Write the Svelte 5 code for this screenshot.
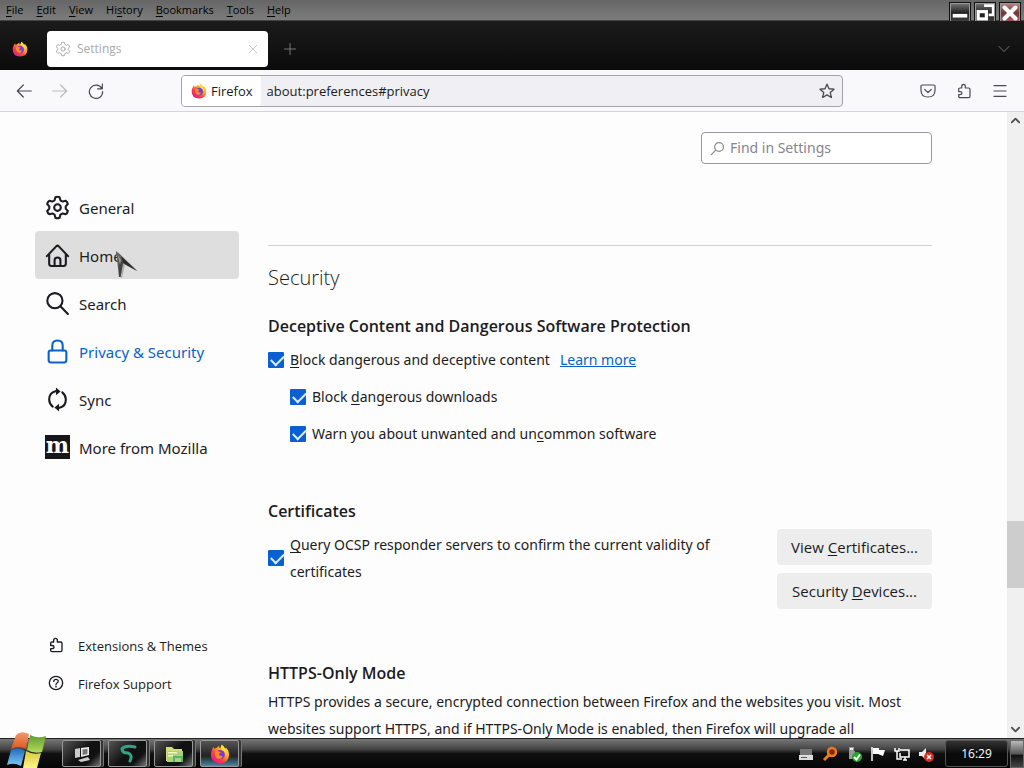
<script lang="ts">
    /* Browser window with the settings page open, above the desktop taskbar. */

    type Item = { icon: string, label: string, state?: string };

    const menus = ['File', 'Edit', 'View', 'History', 'Bookmarks', 'Tools', 'Help'];
    const menuKeys = [0, 0, 0, 2, 0, 0, 0];

    const categories: Item[] = [
        { icon: 'gear', label: 'General' },
        { icon: 'home', label: 'Home', state: 'hovered' },
        { icon: 'search', label: 'Search' },
        { icon: 'lock', label: 'Privacy & Security', state: 'selected' },
        { icon: 'sync', label: 'Sync' },
        { icon: 'mozilla', label: 'More from Mozilla' }
    ];

    const extras: Item[] = [
        { icon: 'puzzle', label: 'Extensions & Themes' },
        { icon: 'help', label: 'Firefox Support' }
    ];

    const tasks = ['pc', 'snake', 'folder', 'firefox'];
    const tray = ['drive', 'key', 'usb', 'flag', 'network', 'sound'];

    let blockContent = $state(true);
    let blockDownloads = $state(true);
    let warnSoftware = $state(true);
    let queryOcsp = $state(true);
    let address = $state('about:preferences#privacy');
    let query = $state('');
</script>

{#snippet icon(name: string)}
    <svg class="icon" viewBox="0 0 24 24" aria-hidden="true">
        {#if name === 'gear'}
            <path d="M10 2.2Q12 1.2 14 2.2L14.8 5.1L17 6.3L19.9 5.6Q21.5 6.6 21.9 8.7L19.9 10.9V13.1L21.9 15.3Q21.5 17.4 19.9 18.4L17 17.7L14.8 18.9L14 21.8Q12 22.8 10 21.8L9.2 18.9L7 17.7L4.1 18.4Q2.5 17.4 2.1 15.3L4.1 13.1V10.9L2.1 8.7Q2.5 6.6 4.1 5.6L7 6.3L9.2 5.1Z" />
            <circle cx="12" cy="12" r="3.2" />
        {:else if name === 'home'}
            <path d="M1.8 12.6L11 3Q12 2.1 13 3L22.2 12.6M4 10.6V20Q4 22 6 22H18Q20 22 20 20V10.6M9.2 22V16.5Q9.2 14 12 14Q14.8 14 14.8 16.5V22" />
        {:else if name === 'search'}
            <circle cx="9.5" cy="9.3" r="7.3" /><path d="M15 14.8L22 22" />
        {:else if name === 'find'}
            <circle cx="14.5" cy="9.5" r="7" /><path d="M9.2 14.6L2 21.8" />
        {:else if name === 'lock'}
            <rect x="3.5" y="11" width="17" height="11.5" rx="2" /><path d="M7 11V6.5Q7 1.5 12 1.5Q17 1.5 17 6.5V11" />
        {:else if name === 'sync'}
            <path d="M10 4Q4 5.5 4 12Q4 16 7.4 18.8M14 20Q20 18.5 20 12Q20 8 16.6 5.2" />
            <path class="solid" d="M10.5 .5V8L15 4.3ZM13.5 16V23.5L9 19.7Z" />
        {:else if name === 'puzzle'}
            <path d="M8.5 7.5V5.2Q8.5 2 11.3 2Q14 2 14 5.2V7.5H19Q21 7.5 21 9.5V20Q21 22 19 22H6Q4 22 4 20V17.5H6Q9 17.5 9 15Q9 12.8 6.5 12.8H4V9.5Q4 7.5 6 7.5Z" />
        {:else if name === 'help'}
            <circle cx="12" cy="12" r="10" /><path d="M8.7 9.6Q8.8 6.5 12 6.5Q15.3 6.5 15.3 9.3Q15.3 11 13.5 12Q12 12.9 12 14.4M12 16.8V18" />
        {:else if name === 'back'}
            <path d="M23 12H2M11 3L2 12L11 21" />
        {:else if name === 'forward'}
            <path d="M1 12H22M13 3L22 12L13 21" />
        {:else if name === 'reload'}
            <path d="M20.6 8A10 10 0 1 0 22 13M21.5 1.5V8.7H14.3" />
        {:else if name === 'close'}
            <path d="M3 3L21 21M21 3L3 21" />
        {:else if name === 'plus'}
            <path d="M12 1V23M1 12H23" />
        {:else if name === 'down'}
            <path d="M2 7L12 17L22 7" />
        {:else if name === 'up'}
            <path d="M2 17L12 7L22 17" />
        {:else if name === 'star'}
            <path d="M12 1.8L15 8.6L22.5 9.3L16.9 14.3L18.6 21.8L12 17.9L5.4 21.8L7.1 14.3L1.5 9.3L9 8.6Z" />
        {:else if name === 'pocket'}
            <path d="M3.5 3H20.5Q22.5 3 22.5 5V11Q22.5 21 12 21Q1.5 21 1.5 11V5Q1.5 3 3.5 3ZM7 9.5L12 14.3L17 9.5" />
        {:else if name === 'menu'}
            <path d="M3 4H21M3 12H21M3 20H21" />
        {/if}
    </svg>
{/snippet}

{#snippet firefox()}
    <svg class="icon" viewBox="0 0 24 24" aria-hidden="true">
        <defs>
            <linearGradient id="flame" x1=".85" y1=".1" x2=".15" y2=".9">
                <stop offset="0" stop-color="#ffe83a" />
                <stop offset=".38" stop-color="#ff9a1f" />
                <stop offset=".68" stop-color="#ff3b47" />
                <stop offset="1" stop-color="#d8208f" />
            </linearGradient>
        </defs>
        <path fill="url(#flame)" d="M2.3 7.2Q3 5 4.6 3.4L5.2 5.6Q6.5 4.7 8 4.8Q9 3 11 2.5L11.3 5Q13.5 5 13.7 1Q17 2.5 18 5.5L19.5 4.5Q23 8 23 13Q22.4 23 12 23.3Q1 22.6 1 12.6Q1 9.6 2.3 7.2Z" />
        <circle cx="12.2" cy="12.8" r="5.6" fill="#7a3bd8" />
        <path fill="#ff8a20" d="M6 9Q8.5 7.5 11 9.2Q13 9.3 13 10.4Q11 11 10.6 12Q11.5 15.4 15 14Q14 18.8 9.5 17.6Q5 15.5 6 9Z" />
        <path fill="#ffdb3d" d="M13.7 1Q17 2.5 18 6.5Q20.5 9 19.3 14Q18 8.5 14.6 7.6Q12.8 5 13.7 1Z" />
    </svg>
{/snippet}

{#snippet category(item: Item)}
    <a class={['item', item.state]} href="#{item.icon}">
        {#if item.icon === 'mozilla'}
            <span class="mozilla" aria-hidden="true">m</span>
        {:else}
            {@render icon(item.icon)}
        {/if}
        <span class="name">{item.label}</span>
        {#if item.state === 'hovered'}
            <svg class="pointer" viewBox="0 0 22 28" aria-hidden="true">
                <path d="M2 1L22 20L9 14L6 27L4 26Z" fill="#0003" />
                <path d="M0 0L21 20L7 12L4.5 26L3 26Z" fill="#666" />
                <path d="M0 0L7 12L4.5 26L3 26L2.5 9Z" fill="#444" />
                <path d="M5 5L21 20L7 12Z" fill="#2c2c2c" />
                <path d="M1 2L5 9L4 14Z" fill="#999" />
            </svg>
        {/if}
    </a>
{/snippet}

<div class="screen">
    <header class="menubar">
        <nav>
            {#each menus as name, i}
                <button>{name.slice(0, menuKeys[i])}<u>{name[menuKeys[i]]}</u>{name.slice(menuKeys[i] + 1)}</button>
            {/each}
        </nav>
        <div class="window-buttons">
            <button aria-label="Minimize">
                <svg viewBox="0 0 22 22"><path d="M3 12H19V16H3Z" fill="#fff" /></svg>
            </button>
            <button aria-label="Restore">
                <svg viewBox="0 0 22 22">
                    <path d="M10 3H20V13H15" fill="none" stroke="#fff" stroke-width="3" />
                    <rect x="3.5" y="9.5" width="9" height="8" fill="#222" stroke="#fff" stroke-width="3.5" />
                </svg>
            </button>
            <button class="close" aria-label="Close">
                <svg viewBox="0 0 22 22"><path d="M5 5L17 17M17 5L5 17" stroke="#fff" stroke-width="4.5" stroke-linecap="round" /></svg>
            </button>
        </div>
    </header>

    <div class="tabs">
        <span class="brand">{@render firefox()}</span>
        <div class="tab">
            {@render icon('gear')}
            <span>Settings</span>
            <button class="tab-close" aria-label="Close tab">{@render icon('close')}</button>
        </div>
        <button class="new-tab" aria-label="New tab">{@render icon('plus')}</button>
        <button class="all-tabs" aria-label="List all tabs">{@render icon('down')}</button>
    </div>

    <div class="toolbar">
        <div class="tools">
            <button aria-label="Back">{@render icon('back')}</button>
            <button class="dim" aria-label="Forward" disabled>{@render icon('forward')}</button>
            <button aria-label="Reload">{@render icon('reload')}</button>
        </div>
        <div class="urlbar">
            <span class="identity">{@render firefox()} Firefox</span>
            <input aria-label="Address" bind:value={address} />
            <button aria-label="Bookmark this page">{@render icon('star')}</button>
        </div>
        <div class="tools right">
            <button aria-label="Save to Pocket">{@render icon('pocket')}</button>
            <button aria-label="Extensions">{@render icon('puzzle')}</button>
            <button aria-label="Application menu">{@render icon('menu')}</button>
        </div>
    </div>

    <div class="page">
        <nav class="sidebar">
            {#each categories as item}
                {@render category(item)}
            {/each}
            <div class="extras">
                {#each extras as item}
                    {@render category(item)}
                {/each}
            </div>
        </nav>

        <main>
            <label class="find">
                {@render icon('find')}
                <input type="text" placeholder="Find in Settings" aria-label="Find in Settings" bind:value={query} />
            </label>

            <h1>Security</h1>

            <section>
                <h2>Deceptive Content and Dangerous Software Protection</h2>
                <div class="check">
                    <input id="block-content" type="checkbox" bind:checked={blockContent} />
                    <label for="block-content"><u>B</u>lock dangerous and deceptive content</label>
                    <a href="#learn">Learn more</a>
                </div>
                <div class="check nested">
                    <input id="block-downloads" type="checkbox" bind:checked={blockDownloads} />
                    <label for="block-downloads">Block <u>d</u>angerous downloads</label>
                </div>
                <div class="check nested">
                    <input id="warn-software" type="checkbox" bind:checked={warnSoftware} />
                    <label for="warn-software">Warn you about unwanted and un<u>c</u>ommon software</label>
                </div>
            </section>

            <section>
                <h2>Certificates</h2>
                <div class="certificates">
                    <div class="check">
                        <input id="ocsp" type="checkbox" bind:checked={queryOcsp} />
                        <label for="ocsp"><u>Q</u>uery OCSP responder servers to confirm the current validity of certificates</label>
                    </div>
                    <div class="buttons">
                        <button>View <u>C</u>ertificates...</button>
                        <button>Security <u>D</u>evices...</button>
                    </div>
                </div>
            </section>

            <section>
                <h2>HTTPS-Only Mode</h2>
                <p>HTTPS provides a secure, encrypted connection between Firefox and the websites you visit. Most websites support HTTPS, and if HTTPS-Only Mode is enabled, then Firefox will upgrade all</p>
            </section>
        </main>

        <div class="scrollbar">
            <button aria-label="Scroll up">{@render icon('up')}</button>
            <div class="track"><div class="thumb"></div></div>
            <button aria-label="Scroll down">{@render icon('down')}</button>
        </div>
    </div>

    <footer class="taskbar">
        <button class="start" aria-label="Start">
            <svg viewBox="0 0 40 36">
                <defs>
                    <linearGradient id="red" y2="1" x2="0"><stop stop-color="#f09a70" /><stop offset="1" stop-color="#e0561c" /></linearGradient>
                    <linearGradient id="green" y2="1" x2="0"><stop stop-color="#5e9c2e" /><stop offset="1" stop-color="#b4dc5c" /></linearGradient>
                    <linearGradient id="blue" y2="1" x2="0"><stop stop-color="#2468b8" /><stop offset="1" stop-color="#7cccf8" /></linearGradient>
                    <linearGradient id="yellow" y2="1" x2="0"><stop stop-color="#d8cc38" /><stop offset="1" stop-color="#fbf48c" /></linearGradient>
                </defs>
                <path fill="url(#red)" d="M9 3Q14 -2 22 2L19 17Q11 13 4 17Z" />
                <path fill="url(#green)" d="M23 3Q31 7 39 4L35 20Q27 22 20 18Z" />
                <path fill="url(#blue)" d="M4 18Q11 14 18 19L14 34Q7 30 0 33Z" />
                <path fill="url(#yellow)" d="M19 19Q26 23 34 21L30 36H16Z" />
            </svg>
        </button>
        <div class="tasks">
            {#each tasks as task}
                <button class={['task', task]} aria-label={task}>
                    {#if task === 'firefox'}
                        {@render firefox()}
                    {:else}
                        <svg class="icon" viewBox="0 0 20 20">
                            {#if task === 'pc'}
                                <path d="M3 5L8 4V13L3 14Z" fill="#ccc" />
                                <path d="M9 4L17 3V11L9 13Z" fill="#eee" />
                                <path d="M10.5 5.5L15.5 4.7V10L10.5 11Z" fill="#777" />
                                <path d="M6 16L16 13L18 16L9 18Z" fill="#ccc" />
                            {:else if task === 'snake'}
                                <path class="snake-line" d="M17 3Q7 1 4 5Q4 9 10 9Q15 11 12 17" />
                            {:else}
                                <path d="M2 3H8L10 5H18V17H2Z" fill="#d5dc7c" />
                                <path d="M3 7H19V18H3Z" fill="#a8d27c" />
                                <path d="M4 8H13V9.5H4ZM4 11H9V12.5H4Z" fill="#f4f6c8" />
                                <path d="M9 18V12H19V18H17V14H11V18Z" fill="#54b66c" />
                            {/if}
                        </svg>
                    {/if}
                </button>
            {/each}
        </div>
        <div class="tray">
            {#each tray as name}
                <svg viewBox="0 0 16 16" aria-hidden="true">
                    {#if name === 'drive'}
                        <path d="M2 3H14V9H2Z" fill="#777" /><path d="M1 9H15V14H1Z" fill="#ddd" /><path d="M3 11H9V12H3Z" fill="#555" />
                    {:else if name === 'key'}
                        <circle cx="10" cy="6" r="4" fill="#7a2c08" stroke="#f07a1c" stroke-width="2.5" /><path d="M7 9L2 14" stroke="#f07a1c" stroke-width="3" />
                    {:else if name === 'usb'}
                        <path d="M3 1H8V5H9V13H3Z" fill="#999" /><path d="M4 2H7V4H4Z" fill="#eee" />
                        <circle cx="11" cy="11" r="5" fill="#25a52c" /><path d="M8 11L10.5 13.5L14 8.5" fill="none" stroke="#fff" stroke-width="2" />
                    {:else if name === 'flag'}
                        <path d="M2 1V15" stroke="#fff" stroke-width="1.5" /><path d="M3 2H9V4H15L13 10L8 8H3Z" fill="#fff" />
                    {:else if name === 'network'}
                        <path d="M6 4H15V11H6V7M9 14H13M11 11V14M1 2V5H5V2M3 5V13H8" fill="none" stroke="#fff" stroke-width="1.5" />
                    {:else}
                        <path d="M1 6H4L8 2V14L4 10H1Z" fill="#eee" /><circle cx="11" cy="11" r="5" fill="#d92b20" /><path d="M9 9L13 13M13 9L9 13" stroke="#fff" stroke-width="1.5" />
                    {/if}
                </svg>
            {/each}
        </div>
        <time>16:29</time>
        <button class="show-desktop" aria-label="Show desktop"></button>
    </footer>
</div>

<style>
    :global(body) {
        background: #fdfdfd;
    }

    .screen {
        display: flex;
        flex-direction: column;
        height: 100vh;
        overflow: hidden;
        font: 14px/20px "Open Sans", "Noto Sans", sans-serif;
        color: #1c1b22;
    }

    * {
        box-sizing: border-box;
    }

    button, input {
        margin: 0;
        padding: 0;
        border: none;
        background: none;
        font: inherit;
        color: inherit;
    }

    button {
        display: grid;
        place-items: center;
    }

    u {
        text-underline-offset: 2px;
    }

    .icon {
        display: block;
        flex: none;
        width: 16px;
        height: 16px;
        fill: none;
        stroke: currentColor;
        stroke-width: 2;
        stroke-linecap: round;
        stroke-linejoin: round;

        & .solid {
            fill: currentColor;
            stroke: none;
        }

        & [fill^="#"], & [fill^="url"] {
            stroke: none;
        }
    }

    .menubar {
        display: flex;
        justify-content: space-between;
        flex: none;
        height: 21px;
        background: linear-gradient(#666, #7c7c7c);
        border-bottom: 1px solid #444;

        & nav {
            display: flex;
            gap: 13px;
            padding-left: 6px;
            font-size: 11px;
            line-height: 20px;
            color: #000;
        }

        & nav button {
            display: block;
        }
    }

    .window-buttons {
        display: flex;
        gap: 3px;
        padding: 2px 3px 0 0;

        & button {
            width: 22px;
            height: 22px;
            border: 1px solid #111;
            outline: 1px solid #999;
            outline-offset: -2px;
            background: linear-gradient(#777, #222 50%, #444);
        }

        & .close {
            background: linear-gradient(#b88, #733 50%, #a66);
        }

        & svg {
            width: 20px;
            height: 20px;
        }
    }

    .tabs {
        display: flex;
        align-items: center;
        flex: none;
        height: 49px;
        padding: 6px 14px 0 12px;
        background: linear-gradient(#1b1b1b, #0b0b0b);
        color: #777;
    }

    .brand {
        width: 35px;
    }

    .tab {
        display: flex;
        align-items: center;
        gap: 6px;
        width: 221px;
        height: 36px;
        padding: 0 10px 0 8px;
        border-radius: 4px;
        background: #fff;
        color: #aaa;
        font-size: 12px;

        & .icon {
            stroke-width: 1.5;
        }
    }

    .tab-close {
        margin-left: auto;

        & .icon {
            width: 10px;
            height: 10px;
        }
    }

    .new-tab {
        margin-left: 16px;

        & .icon {
            width: 12px;
            height: 12px;
        }
    }

    .all-tabs {
        margin-left: auto;

        & .icon {
            width: 12px;
            height: 12px;
        }
    }

    .toolbar {
        display: flex;
        align-items: center;
        justify-content: space-between;
        flex: none;
        height: 42px;
        padding: 0 16px;
        border-bottom: 1px solid #d4d4da;
        background: #f9f9fb;
        color: #4a4a52;
    }

    .tools {
        display: flex;
        flex: 1;
        gap: 20px;

        & .icon {
            stroke-width: 1.8;
        }
    }

    .right {
        justify-content: flex-end;
    }

    .dim {
        opacity: .35;
    }

    .urlbar {
        display: flex;
        align-items: center;
        width: 662px;
        height: 32px;
        padding-right: 7px;
        border: 1px solid #a3a3aa;
        border-radius: 4px;
        background: #f0f0f4;
        font-size: 13px;
        color: #1c1b22;

        & input {
            flex: 1;
            min-width: 0;
            height: 100%;
            padding-left: 6px;
        }

        & button {
            color: #4a4a52;
        }
    }

    .identity {
        display: flex;
        align-items: center;
        gap: 4px;
        height: 30px;
        padding: 0 8px 0 9px;
        border-radius: 3px;
        background: #fff;
    }

    .page {
        display: flex;
        flex: 1;
        min-height: 0;
        background: #fdfdfd;
        font-family: "Noto Sans", "Open Sans", sans-serif;
    }

    .sidebar {
        display: flex;
        flex-direction: column;
        flex: none;
        width: 204px;
        margin-left: 35px;
        padding: 71px 0 36px;
        font-size: 15px;
    }

    .item {
        position: relative;
        display: flex;
        align-items: center;
        gap: 9px;
        height: 48px;
        padding: 0 10px;
        border-radius: 4px;
        color: #1c1b22;
        text-decoration: none;

        & .icon {
            width: 25px;
            height: 25px;
        }
    }

    .name {
        padding-top: 2px;
    }

    .hovered {
        background: #dedede;
    }

    .selected {
        color: #0a62c8;
    }

    .mozilla {
        width: 25px;
        height: 24px;
        background: #17171b;
        color: #fff;
        font: bold 22px/20px "DejaVu Serif", serif;
        text-align: center;
    }

    .pointer {
        position: absolute;
        left: 81px;
        top: 20px;
        width: 22px;
        height: 28px;
    }

    .extras {
        margin-top: auto;
        font-family: "Open Sans", "Noto Sans", sans-serif;
        font-size: 13px;

        & .item {
            gap: 14px;
            height: 38px;
            padding: 0 13px;
        }

        & .icon {
            width: 16px;
            height: 16px;
        }
    }

    main {
        flex: 1;
        min-width: 0;
        padding: 20px 75px 0 29px;
        overflow: hidden;
    }

    .find {
        display: flex;
        align-items: center;
        gap: 5px;
        width: 231px;
        height: 32px;
        margin-left: auto;
        padding: 0 8px;
        border: 1px solid #98989f;
        border-radius: 4px;
        background: #fff;
        color: #8a8a90;

        & .icon {
            width: 15px;
            height: 15px;
        }

        & input {
            flex: 1;
            min-width: 0;
        }

        & input::placeholder {
            color: #85858c;
            opacity: 1;
        }
    }

    h1, h2 {
        font-family: "Open Sans", "Noto Sans", sans-serif;
    }

    h1 {
        margin: 81px 0 0;
        padding-top: 16px;
        border-top: 1px solid #d0d0d3;
        font-size: 20px;
        line-height: 32px;
        font-weight: 300;
    }

    h2 {
        margin: 0;
        font-size: 16px;
        line-height: 24px;
        font-weight: 600;
    }

    section {
        margin-top: 20px;
    }

    section + section {
        margin-top: 47px;
    }

    .check {
        display: flex;
        align-items: center;
        gap: 6px;
        min-height: 37px;
        margin-top: 3px;

        & a {
            margin-left: 4px;
            color: #0a62c8;
        }

        & input {
            appearance: none;
            flex: none;
            width: 16px;
            height: 16px;
            border-radius: 1px;
            border: 1px solid #8f8f9d;
        }

        & input:checked {
            border: none;
            background: #0a60d0;
        }

        & input:checked::after {
            content: "";
            display: block;
            width: 11px;
            height: 6px;
            margin: 3px;
            border: solid #d8ecff;
            border-width: 0 0 2px 2px;
            transform: rotate(-45deg);
        }
    }

    .nested {
        margin: 0 0 0 22px;
    }

    .certificates {
        display: flex;
        align-items: flex-start;
        gap: 56px;
        padding-bottom: 5px;

        & .check {
            flex: 1;
            margin-top: 8px;
            line-height: 27px;
        }
    }

    .buttons {
        display: grid;
        gap: 8px;
        margin-top: 6px;
        font-family: "Open Sans", "Noto Sans", sans-serif;
        font-size: 15px;

        & button {
            display: block;
            height: 36px;
            padding: 0 14px;
            border-radius: 4px;
            background: #ededee;
        }
    }

    p {
        margin: 3px 0 0;
        line-height: 27px;
    }

    .scrollbar {
        display: flex;
        flex-direction: column;
        flex: none;
        width: 17px;
        background: #f0f0f0;
        color: #505050;

        & button {
            height: 17px;
        }

        & .icon {
            width: 9px;
            height: 9px;
            stroke-width: 5;
        }
    }

    .track {
        flex: 1;
        display: flex;
        flex-direction: column;
        justify-content: flex-end;
        padding-bottom: 133px;
    }

    .thumb {
        height: 67px;
        background: #cdcdcd;
    }

    .taskbar {
        display: flex;
        align-items: center;
        flex: none;
        height: 30px;
        border-top: 1px solid #222;
        background: linear-gradient(#777, #444 35%, #111 50%, #050505);
        color: #fff;
    }

    .start {
        position: relative;
        width: 62px;
        height: 100%;

        & svg {
            position: absolute;
            left: 7px;
            bottom: 0;
            width: 40px;
            height: 36px;
        }
    }

    .tasks {
        display: flex;
        gap: 7px;
    }

    .task {
        width: 39px;
        height: 27px;
        border: 1px solid #999;
        border-radius: 2px;
        background: linear-gradient(135deg, #555, #111 50%, #111 75%, #777);
        box-shadow: 2px 0 #333, 3px 0 #777;

        & .icon {
            width: 20px;
            height: 20px;
        }
    }

    .task.firefox {
        background: linear-gradient(#555, #222 60%, #4d86a0);
    }

    .snake-line {
        stroke: #2fa583;
        stroke-width: 3;
    }

    .tray {
        display: flex;
        gap: 8px;
        margin-left: auto;
        padding-right: 11px;

        & svg {
            width: 16px;
            height: 16px;
        }
    }

    time {
        width: 63px;
        height: 27px;
        border: 1px solid #555;
        border-radius: 3px;
        background: linear-gradient(#333, #0a0a0a 50%);
        font-size: 12px;
        line-height: 25px;
        text-align: center;
    }

    .show-desktop {
        width: 14px;
        height: 28px;
        margin-left: 2px;
        border: 1px solid #666;
        background: linear-gradient(#bbb, #555 50%, #111 55%, #444);
    }
</style>
